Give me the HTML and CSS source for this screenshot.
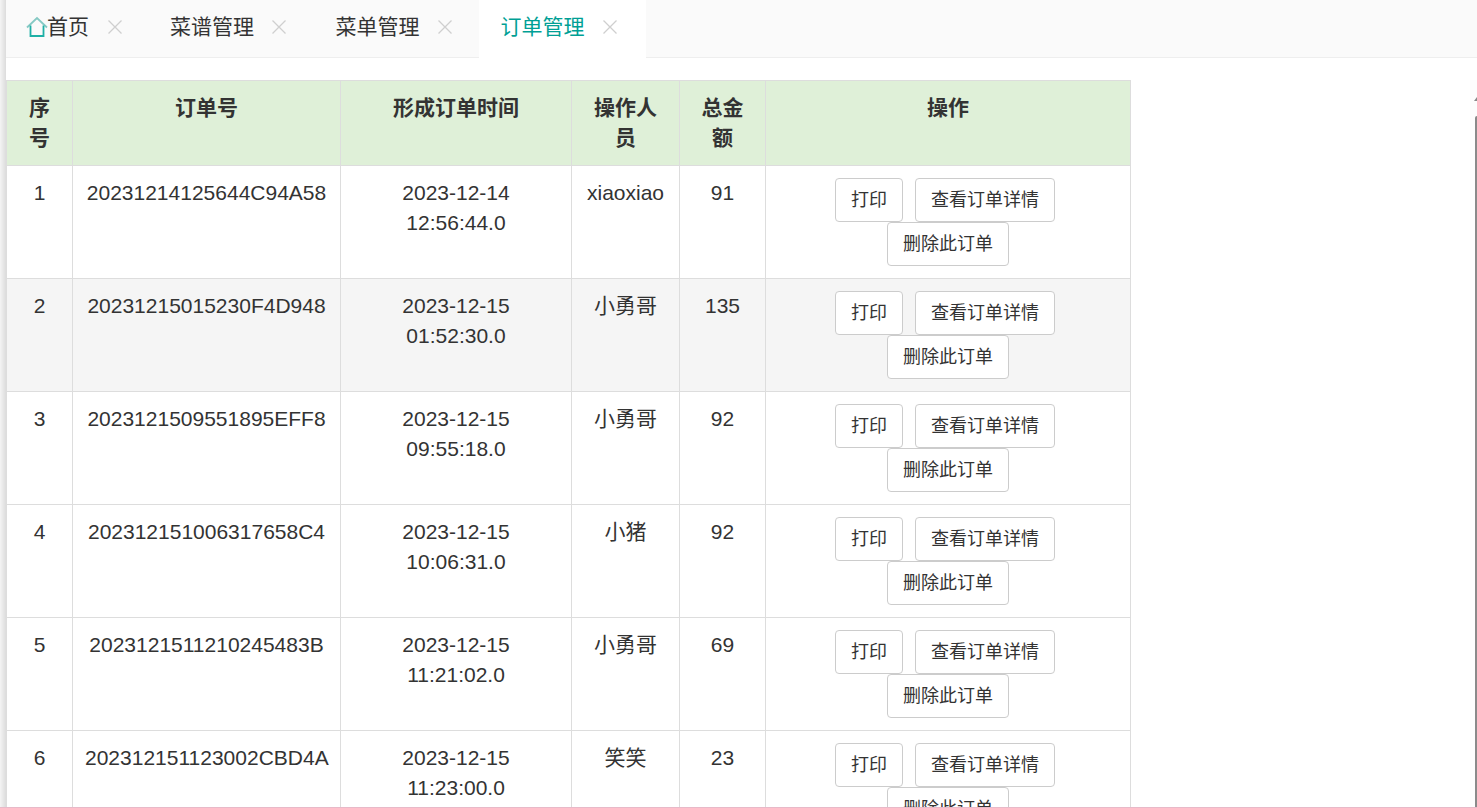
FILE: index.html
```html
<!DOCTYPE html>
<html lang="en">
<head>
    <meta charset="UTF-8">
    <title>订单管理</title>
    <link rel="stylesheet" href="styles.css">
</head>
<body>
<div class="page">
    <div class="tabBar">
        <div class="tab home">
            <svg class="homeIcon" viewBox="0 0 22 22" fill="none"><path d="M1 11.500 11 2l10 9.500" stroke="#86c9c4" stroke-width="1.800"/><path d="M4.500 9.500V20h13V9.500" stroke="#1fb0a6" stroke-width="1.800"/></svg>
            <span class="tabTitle">首页</span>
            <svg class="tabClose" viewBox="0 0 14 14"><path d="M0.500 0.500 13.500 13.500M13.500 0.500 0.500 13.500"/></svg>
        </div>
        <div class="tab">
            <span class="tabTitle">菜谱管理</span>
            <svg class="tabClose" viewBox="0 0 14 14"><path d="M0.500 0.500 13.500 13.500M13.500 0.500 0.500 13.500"/></svg>
        </div>
        <div class="tab">
            <span class="tabTitle">菜单管理</span>
            <svg class="tabClose" viewBox="0 0 14 14"><path d="M0.500 0.500 13.500 13.500M13.500 0.500 0.500 13.500"/></svg>
        </div>
        <div class="tab active">
            <span class="tabTitle">订单管理</span>
            <svg class="tabClose" viewBox="0 0 14 14"><path d="M0.500 0.500 13.500 13.500M13.500 0.500 0.500 13.500"/></svg>
        </div>
    </div>
    <div class="content">
        <table class="orderTable">
            <thead>
                <tr>
                    <th class="colNo">序号</th>
                    <th class="colId">订单号</th>
                    <th class="colTime">形成订单时间</th>
                    <th class="colUser">操作人员</th>
                    <th class="colSum">总金额</th>
                    <th class="colOps">操作</th>
                </tr>
            </thead>
            <tbody id="orderRows"></tbody>
        </table>
    </div>
    <div class="scrollTrack">
        <div class="scrollArrow"></div>
        <div class="scrollThumb"></div>
    </div>
</div>
<script>
let orders = [
    ["1", "20231214125644C94A58", "2023-12-14 12:56:44.0", "xiaoxiao", "91"],
    ["2", "20231215015230F4D948", "2023-12-15 01:52:30.0", "小勇哥", "135"],
    ["3", "2023121509551895EFF8", "2023-12-15 09:55:18.0", "小勇哥", "92"],
    ["4", "202312151006317658C4", "2023-12-15 10:06:31.0", "小猪", "92"],
    ["5", "2023121511210245483B", "2023-12-15 11:21:02.0", "小勇哥", "69"],
    ["6", "202312151123002CBD4A", "2023-12-15 11:23:00.0", "笑笑", "23"]
];

let rows = document.getElementById("orderRows");
orders.forEach(function(order, n){
    let tr = document.createElement("tr");
    // second row is the one under the mouse
    if(n === 1) tr.className = "hovered";
    order.forEach(function(value){
        let td = document.createElement("td");
        td.textContent = value;
        tr.appendChild(td);
    });
    let ops = document.createElement("td");
    ["打印", "查看订单详情", "删除此订单"].forEach(function(label, i){
        let btn = document.createElement("button");
        btn.className = "btn";
        btn.textContent = label;
        ops.appendChild(btn);
        if(i < 2) ops.appendChild(document.createTextNode(" "));
    });
    tr.appendChild(ops);
    rows.appendChild(tr);
});
</script>
</body>
</html>
```

FILE: styles.css
```css
html, body{
    margin: 0;
    height: 100%;
    overflow: hidden;
    background: #fff;
}

body{
    color: #333;
    font-family: "Liberation Sans", "Noto Sans CJK SC", sans-serif;
    font-size: 21px;
    line-height: 30px;
}

.page{
    position: relative;
    box-sizing: border-box;
    height: 808px;
    overflow: hidden;
    padding-left: 6px;
    border-bottom: 1px solid #e8b9c8;
    background: linear-gradient(to right, #f4f4f4, #dcdcdc 6px, #fff 6px) no-repeat;
}

.tabBar{
    display: flex;
    height: 57px;
    background: #fafafa;
    border-bottom: 1px solid #eee;
}

.tab{
    box-sizing: border-box;
    display: flex;
    align-items: center;
    flex: none;
    width: 165.500px;
    height: 58px;
    padding: 0 0 4px 22px;
    color: #333;
}

.tab.home{
    width: 142px;
    padding-left: 20px;
}

.tab.active{
    width: 167px;
    padding-left: 21.500px;
    background: #fff;
    color: #009f95;
}

.homeIcon{
    width: 22px;
    height: 22px;
    margin-right: -1px;
    flex: none;
}

.tabTitle{
    flex: none;
}

.tabClose{
    width: 14px;
    height: 14px;
    margin-left: 18px;
    flex: none;
    fill: none;
    stroke: #cfcfcf;
    stroke-width: 1.300;
}

.tab.home .tabClose{
    margin-left: 18.500px;
}

.content{
    padding-top: 22px;
}

.orderTable{
    width: 1125px;
    table-layout: fixed;
    border-collapse: collapse;
    text-align: center;
}

.orderTable th,
.orderTable td{
    box-sizing: border-box;
    border: 1px solid #ddd;
    padding: 12px;
    vertical-align: top;
}

.orderTable th{
    background: #dff0d8;
    font-weight: bold;
}

.orderTable tr.hovered{
    background: #f5f5f5;
}

.colNo{ width: 66px; }
.colId{ width: 268px; }
.colTime{ width: 231px; }
.colUser{ width: 108px; }
.colSum{ width: 86px; }
.colOps{ width: 365px; }

.btn{
    box-sizing: border-box;
    height: 44px;
    padding: 0 15px 4px;
    background: #fff;
    border: 1px solid #ccc;
    border-radius: 4px;
    color: #333;
    font-family: inherit;
    font-size: 18px;
    vertical-align: top;
}

.btn + .btn{
    margin-left: 6px;
}

.btn:nth-child(2){
    margin-right: 6px;
}

.btn:nth-child(3){
    margin-left: 0;
}

/* scrollbar sliver left at the right edge of the window */
.scrollTrack{
    position: absolute;
    top: 80px;
    right: 0;
    bottom: 0;
    width: 7px;
    background: #fdfdfd;
}

.scrollArrow{
    position: absolute;
    top: 17px;
    right: 0;
    width: 3px;
    height: 4px;
    background: #8a8a8a;
    clip-path: polygon(100% 0, 100% 100%, 0 100%);
}

.scrollThumb{
    position: absolute;
    top: 36px;
    right: 0;
    bottom: 0;
    width: 2px;
    background: #8a8a8a;
    border-top-left-radius: 2px;
}
```
